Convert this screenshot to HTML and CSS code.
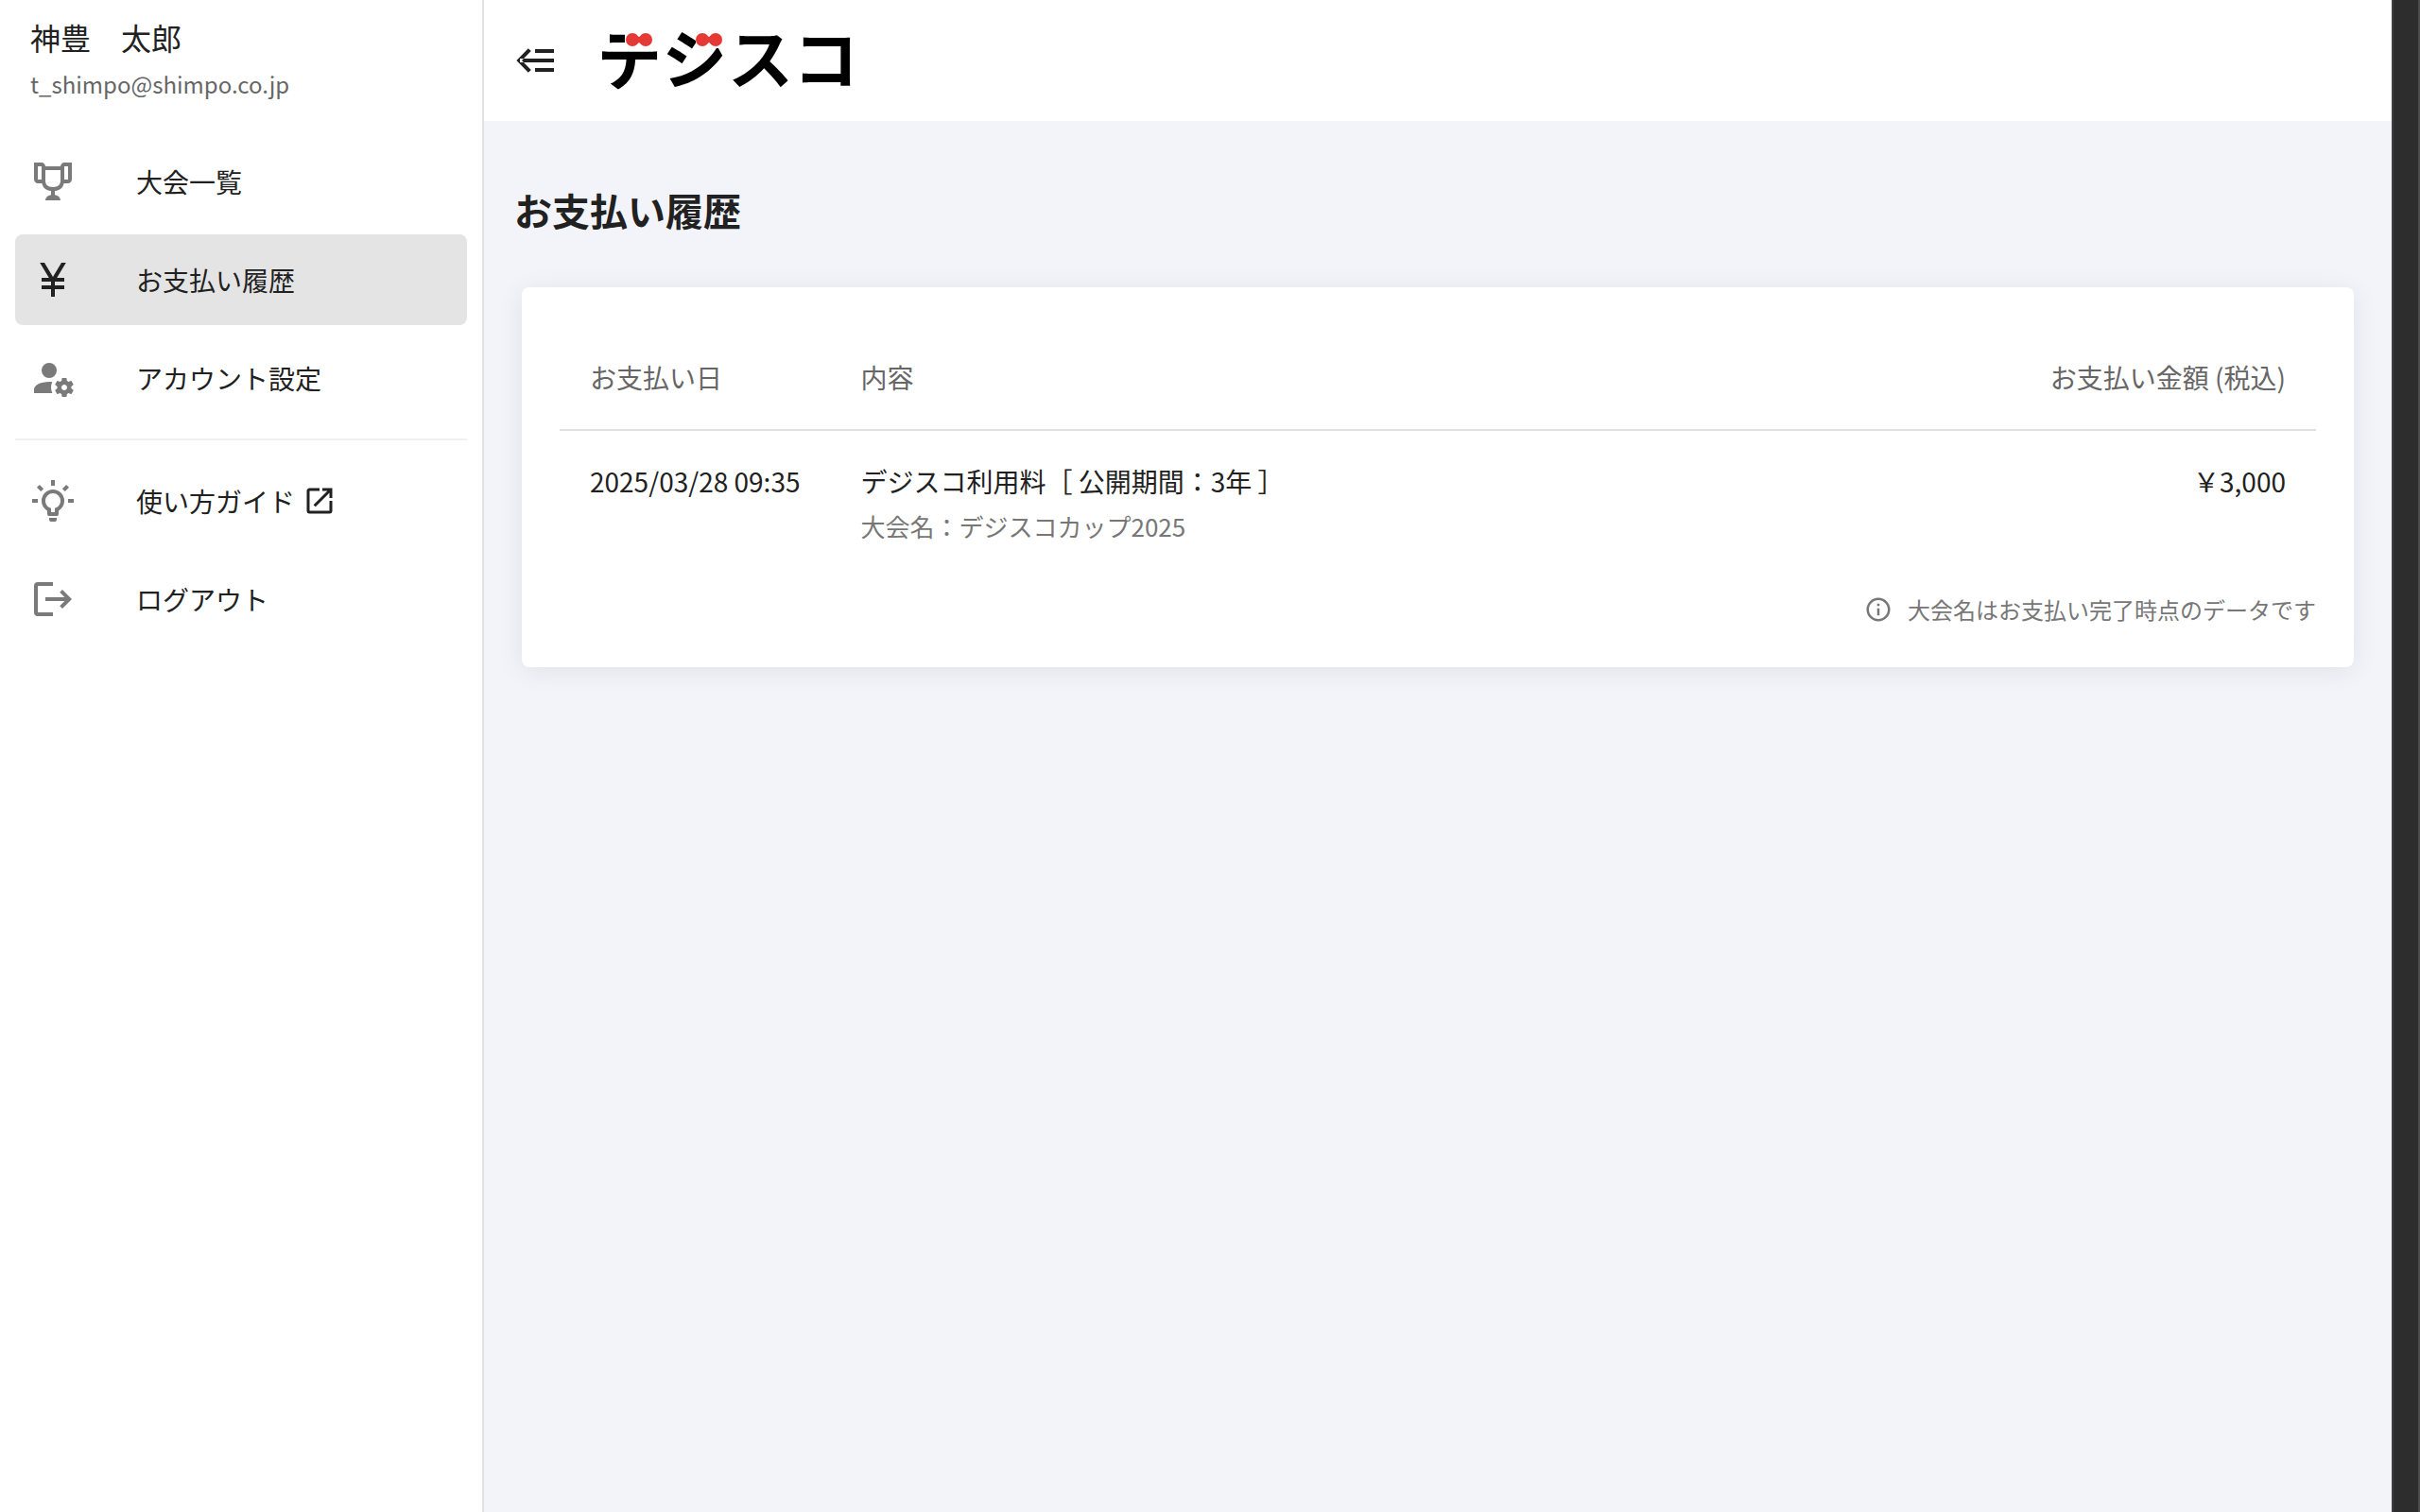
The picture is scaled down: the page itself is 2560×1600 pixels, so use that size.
FILE: index.html
```html
<!DOCTYPE html>
<html lang="ja">
<head>
  <meta charset="UTF-8">
  <meta name="viewport" content="width=device-width, initial-scale=1.0">
  <title>お支払い履歴</title>
  <link rel="stylesheet" href="styles.css">
</head>
<body>
<div class="app">
  <aside class="sidebar">
    <div class="user">
      <p class="user-name">神豊　太郎</p>
      <p class="user-mail">t_shimpo@shimpo.co.jp</p>
    </div>
    <nav class="menu">
      <a class="menu-item" href="#">
        <svg class="icon" viewBox="0 0 24 24"><path d="M18 2C17.1 2 16 3 16 4H8C8 3 6.9 2 6 2H2V11C2 12 3 13 4 13H6.2C6.6 15 7.9 16.7 11 17V19.08C8 19.54 8 22 8 22H16C16 22 16 19.54 13 19.08V17C16.1 16.7 17.4 15 17.8 13H20C21 13 22 12 22 11V2H18M6 11H4V4H6V11M16 11.5C16 13.4 15 15 12 15C9 15 8 13.4 8 11.5V6H16V11.5M20 11H18V4H20V11Z"/></svg>
        <span>大会一覧</span>
      </a>
      <a class="menu-item active" href="#">
        <svg class="icon" viewBox="0 0 24 24"><path d="M11 21V17H6V15H11V13H6V11H9.9L5.1 3H7.5L12 10.5L16.5 3H18.9L14.1 11H18V13H13V15H18V17H13V21H11Z"/></svg>
        <span>お支払い履歴</span>
      </a>
      <a class="menu-item" href="#">
        <svg class="icon" viewBox="0 0 24 24"><path d="M10 4A4 4 0 0 0 6 8A4 4 0 0 0 10 12A4 4 0 0 0 14 8A4 4 0 0 0 10 4M17 12C16.87 12 16.76 12.09 16.74 12.21L16.55 13.53C16.25 13.66 15.96 13.82 15.7 14L14.46 13.5C14.35 13.5 14.22 13.5 14.15 13.63L13.15 15.36C13.09 15.47 13.11 15.6 13.21 15.68L14.27 16.5C14.25 16.67 14.24 16.83 14.24 17C14.24 17.17 14.25 17.33 14.27 17.5L13.21 18.32C13.12 18.4 13.09 18.53 13.15 18.64L14.15 20.37C14.21 20.5 14.34 20.5 14.46 20.5L15.7 20C15.96 20.18 16.24 20.35 16.55 20.47L16.74 21.79C16.76 21.91 16.86 22 17 22H19C19.11 22 19.22 21.91 19.24 21.79L19.43 20.47C19.73 20.34 20 20.18 20.27 20L21.5 20.5C21.63 20.5 21.76 20.5 21.83 20.37L22.83 18.64C22.89 18.53 22.86 18.4 22.77 18.32L21.7 17.5C21.72 17.33 21.74 17.17 21.74 17C21.74 16.83 21.73 16.67 21.7 16.5L22.76 15.68C22.85 15.6 22.88 15.47 22.82 15.36L21.82 13.63C21.76 13.5 21.63 13.5 21.5 13.5L20.27 14C20 13.82 19.73 13.65 19.42 13.53L19.23 12.21C19.22 12.09 19.11 12 19 12H17M10 14C5.58 14 2 15.79 2 18V20H11.68A7 7 0 0 1 11 17A7 7 0 0 1 11.64 14.09C11.11 14.03 10.56 14 10 14M18 15.5C18.83 15.5 19.5 16.17 19.5 17C19.5 17.83 18.83 18.5 18 18.5C17.16 18.5 16.5 17.83 16.5 17C16.5 16.17 17.17 15.5 18 15.5Z"/></svg>
        <span>アカウント設定</span>
      </a>
      <hr class="divider">
      <a class="menu-item" href="#">
        <svg class="icon" viewBox="0 0 24 24"><path d="M20,11H23V13H20V11M1,11H4V13H1V11M13,1V4H11V1H13M4.92,3.5L7.05,5.64L5.63,7.05L3.5,4.93L4.92,3.5M16.95,5.63L19.07,3.5L20.5,4.93L18.37,7.05L16.95,5.63M12,6A6,6 0 0,1 18,12C18,14.22 16.79,16.16 15,17.2V19A1,1 0 0,1 14,20H10A1,1 0 0,1 9,19V17.2C7.21,16.16 6,14.22 6,12A6,6 0 0,1 12,6M14,21V22A1,1 0 0,1 13,23H11A1,1 0 0,1 10,22V21H14M11,18H13V15.87C14.73,15.43 16,13.86 16,12A4,4 0 0,0 12,8A4,4 0 0,0 8,12C8,13.86 9.27,15.43 11,15.87V18Z"/></svg>
        <span>使い方ガイド</span>
        <svg class="icon-link" viewBox="0 0 24 24"><path d="M14,3V5H17.59L7.76,14.83L9.17,16.24L19,6.41V10H21V3M19,19H5V5H12V3H5C3.89,3 3,3.9 3,5V19A2,2 0 0,0 5,21H19A2,2 0 0,0 21,19V12H19V19Z"/></svg>
      </a>
      <a class="menu-item" href="#">
        <svg class="icon" viewBox="0 0 24 24"><path d="M12 3H4A2 2 0 0 0 2 5V19A2 2 0 0 0 4 21H12V19H4V5H12ZM8 11H18.2L15.6 8.4L17 7L22 12L17 17L15.6 15.6L18.2 13H8Z"/></svg>
        <span>ログアウト</span>
      </a>
    </nav>
  </aside>

  <div class="content">
    <header class="topbar">
      <button class="toggle" type="button" aria-label="メニューを閉じる">
        <svg class="icon" viewBox="0 0 24 24"><path d="M12 6H22V8H12ZM12 16H22V18H12ZM4 11H22V13H4ZM8.4 5.6L2.2 12L8.4 18.4L9.9 17L5 12L9.9 7Z"/></svg>
      </button>
      <!-- logo: the ribbons stand in for the voicing marks -->
      <svg class="logo" viewBox="0 -16 320 112">
        <text class="logo-text" x="2" y="65">デジスコ</text>
        <g fill="#fff">
          <rect x="31" y="2" width="43" height="24"/>
          <rect x="106" y="2" width="36" height="25"/>
        </g>
        <g id="ribbon" fill="#e53935">
          <circle cx="39" cy="18" r="7"/>
          <circle cx="53" cy="18" r="7"/>
          <path d="M42 13L46 15L50 13V23L46 21L42 23Z"/>
        </g>
        <use href="#ribbon" x="74"/>
      </svg>
    </header>

    <main class="page">
      <h1>お支払い履歴</h1>
      <section class="card">
        <table class="history">
          <thead>
            <tr>
              <th>お支払い日</th>
              <th class="detail">内容</th>
              <th class="amount">お支払い金額 (税込)</th>
            </tr>
          </thead>
          <tbody>
            <tr>
              <td>2025/03/28 09:35</td>
              <td class="detail">
                <p>デジスコ利用料［ 公開期間：3年 ］</p>
                <p class="sub">大会名：デジスコカップ2025</p>
              </td>
              <td class="amount">￥3,000</td>
            </tr>
          </tbody>
        </table>
        <p class="note">
          <svg class="icon-info" viewBox="0 0 24 24"><path d="M11,9H13V7H11M12,20C7.59,20 4,16.41 4,12C4,7.59 7.59,4 12,4C16.41,4 20,7.59 20,12C20,16.41 16.41,20 12,20M12,2A10,10 0 0,0 2,12A10,10 0 0,0 12,22A10,10 0 0,0 22,12A10,10 0 0,0 12,2M11,17H13V11H11V17Z"/></svg>
          <span>大会名はお支払い完了時点のデータです</span>
        </p>
      </section>
    </main>
  </div>
  <div class="edge"></div>
</div>
</body>
</html>
```

FILE: styles.css
```css
* {
  box-sizing: border-box;
}
body {
  margin: 0;
  font-family: "Noto Sans CJK JP", sans-serif;
  font-size: 28px;
  line-height: 46px;
  color: #212121;
  background-color: #f3f4f9;
}
p, h1 {
  margin: 0;
}
svg {
  display: block;
  fill: currentColor;
}
.app {
  display: flex;
  min-height: 100vh;
}

/* sidebar */
.sidebar {
  flex: none;
  width: 512px;
  padding: 16px;
  background-color: #fff;
  border-right: 2px solid #e0e0e0;
}
.user {
  padding: 0 16px;
}
.user-name {
  font-size: 32px;
}
.user-mail {
  margin-top: 4px;
  font-size: 24px;
  color: #666;
}
.menu {
  display: flex;
  flex-direction: column;
  gap: 8px;
  margin-top: 32px;
}
.menu-item {
  display: flex;
  align-items: center;
  height: 96px;
  padding: 0 16px;
  border-radius: 8px;
  color: inherit;
  text-decoration: none;
}
.menu-item.active {
  background-color: #e4e4e4;
}
.icon {
  width: 48px;
  height: 48px;
}
.menu-item .icon {
  margin-right: 64px;
  color: #7a7a7a;
}
.menu-item.active .icon {
  color: #212121;
}
.icon-link {
  width: 36px;
  height: 36px;
  margin-left: 8px;
}
.divider {
  width: 100%;
  margin: 8px 0;
  border: 0;
  border-top: 2px solid #f0f0f0;
}

/* header */
.content {
  flex: 1;
  min-width: 0;
}
.topbar {
  display: flex;
  align-items: center;
  height: 128px;
  padding: 0 30px;
  background-color: #fff;
}
.toggle {
  padding: 0;
  border: 0;
  background: none;
  color: #212121;
  cursor: pointer;
}
.logo {
  width: 320px;
  height: 112px;
  margin-left: 40px;
}
.logo-text {
  font-size: 69px;
  font-weight: bold;
  fill: #000;
}

/* payment history */
.page {
  padding: 64px 32px;
}
h1 {
  font-size: 40px;
  line-height: 60px;
}
.card {
  margin: 52px 8px 0;
  padding: 40px;
  border-radius: 8px;
  background-color: #fff;
  box-shadow: 0 4px 28px rgba(0, 0, 0, 0.08);
}
.history {
  width: 100%;
  border-collapse: separate;
  border-spacing: 0;
}
.history th,
.history td {
  padding: 32px;
  text-align: left;
  vertical-align: top;
  white-space: nowrap;
}
.history th {
  border-bottom: 2px solid #e0e0e0;
  font-weight: normal;
  color: #666;
}
.history td {
  padding-top: 30px;
}
.history .detail {
  width: 100%;
}
.history .amount {
  text-align: right;
}
.sub {
  margin-top: 4px;
  font-size: 26px;
  line-height: 42px;
  color: #777;
}
.note {
  display: flex;
  align-items: center;
  justify-content: flex-end;
  gap: 16px;
  margin-top: 14px;
  font-size: 24px;
  line-height: 42px;
  color: #777;
}
.icon-info {
  width: 30px;
  height: 30px;
}

/* dark strip at the right edge */
.edge {
  flex: none;
  width: 30px;
  background-color: #2d2d2d;
  border-left: 2px solid #3e3e3e;
  border-right: 2px solid #4c4c4c;
}
```
